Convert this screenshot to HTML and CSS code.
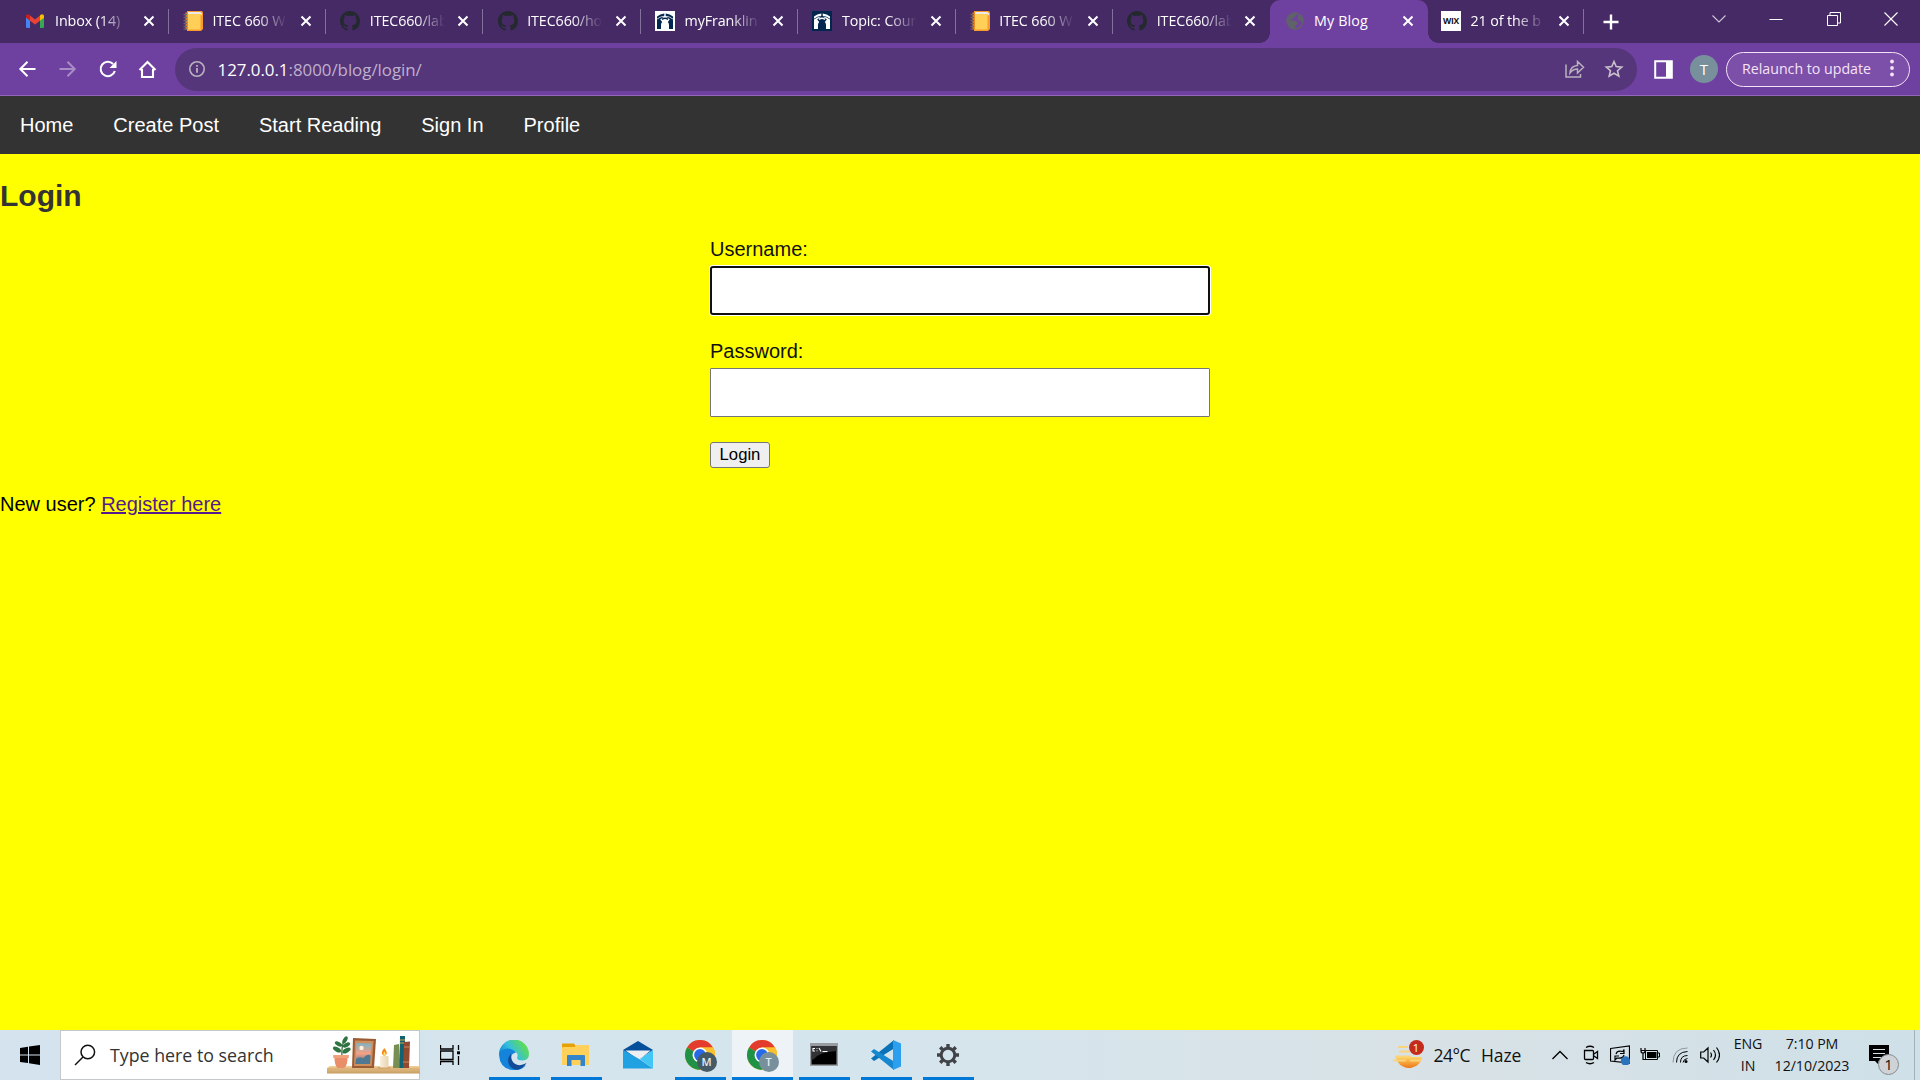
FILE: index.html
```html
<!DOCTYPE html>
<html lang="en">
<head>
<meta charset="utf-8">
<title>My Blog</title>
<link rel="stylesheet" href="styles.css">
</head>
<body>
<svg class="defs" width="0" height="0">
  <symbol id="x" viewBox="0 0 12 12"><path d="M1.500 1.500l9 9M10.500 1.500l-9 9" stroke="#fff" stroke-width="2" fill="none"/></symbol>
  <symbol id="github" viewBox="0 0 16 16"><path fill="#24292f" d="M8 0C3.58 0 0 3.58 0 8c0 3.54 2.29 6.53 5.47 7.59.4.07.55-.17.55-.38 0-.19-.01-.82-.01-1.49-2.01.37-2.53-.49-2.69-.94-.09-.23-.48-.94-.82-1.13-.28-.15-.68-.52-.01-.53.63-.01 1.08.58 1.23.82.72 1.21 1.87.87 2.33.66.07-.52.28-.87.51-1.07-1.78-.2-3.64-.89-3.64-3.95 0-.87.31-1.59.82-2.15-.08-.2-.36-1.02.08-2.12 0 0 .67-.21 2.2.82.64-.18 1.32-.27 2-.27s1.36.09 2 .27c1.53-1.04 2.2-.82 2.2-.82.44 1.1.16 1.92.08 2.12.51.56.82 1.27.82 2.15 0 3.07-1.87 3.75-3.65 3.95.29.25.54.73.54 1.48 0 1.07-.01 1.93-.01 2.2 0 .21.15.46.55.38A8.01 8.01 0 0 0 16 8c0-4.42-3.58-8-8-8z"/></symbol>
  <symbol id="notebook" viewBox="0 0 20 20"><path d="M4 0h14.500a1.500 1.500 0 0 1 1.500 1.500V18l-2 2H4z" fill="#fb9a2c"/><path d="M5 1h12.500l1.500 1.500v2L17 3H5z" fill="#eceae8"/><path d="M4.500 3h13v15.500h-13z" fill="#ffcf57"/><path d="M2.500 1.500h2.500v17H2.500z" fill="#ee8a18"/><path d="M.5 3.500h3.500M.5 6.500h3.500M.5 9.500h3.500M.5 12.500h3.500M.5 15.500h3.500M.5 18.200h3.500" stroke="#6b6371" stroke-width="1.300"/></symbol>
  <symbol id="gate" viewBox="0 0 20 20"><path d="M2 5.500Q5 3.200 9.300 2.500v2.300Q5 5.300 2 7.800zM18 5.500Q15 3.200 10.700 2.500v2.300q4.300.5 7.300 3z" fill="currentColor"/><path d="M2 8.500Q5 6 9 5.600L5.200 8.500l2 2.500Q6 12 6 14v4H2zM18 8.500Q15 6 11 5.600l3.800 2.900-2 2.500Q14 12 14 14v4h4z" fill="currentColor"/><path d="M7 8.300Q10 6 13 8.300" fill="none" stroke="currentColor" stroke-width="1.500"/></symbol>
  <symbol id="chrome" viewBox="0 0 30 30"><circle cx="15" cy="15" r="15" fill="#fbc02d"/><path d="M15 15L2 7.500A15 15 0 0 1 28 7.500H15z" fill="#e33b2e"/><path d="M15 15L2 7.500A15 15 0 0 0 14.600 30L21.500 18.700z" fill="#209246"/><path d="M15 7.500h13.200A15 15 0 0 1 14.600 30L21.500 18.700z" fill="#fbc02d"/><circle cx="15" cy="15" r="7.500" fill="#fff"/><circle cx="15" cy="15" r="5.900" fill="#2869ea"/></symbol>
</svg>

<header class="browser">
  <div class="tabstrip">
    <div class="tab">
      <svg class="fav" viewBox="0 0 20 20"><path d="M1 5.500l4 3V17H2.200A1.200 1.200 0 0 1 1 15.800z" fill="#4285f4"/><path d="M19 5.500l-4 3V17h2.800a1.200 1.200 0 0 0 1.200-1.200z" fill="#34a853"/><path d="M5 4.500l5 3.900 5-3.900v5.200l-5 3.900-5-3.900z" fill="#ea4335"/><path d="M1 5.200C1 3.200 3 2.600 4.300 3.800L5 4.500v5.200L1 6.800z" fill="#c5221f"/><path d="M19 5.200c0-2-2-2.600-3.300-1.400l-.7.7v5.200l4-2.900z" fill="#fbbc04"/></svg>
      <span class="title">Inbox (14)</span><svg class="close"><use href="#x"/></svg>
    </div>
    <div class="tab"><svg class="fav"><use href="#notebook"/></svg><span class="title">ITEC 660 W</span><svg class="close"><use href="#x"/></svg></div>
    <div class="tab"><svg class="fav"><use href="#github"/></svg><span class="title">ITEC660/lab</span><svg class="close"><use href="#x"/></svg></div>
    <div class="tab"><svg class="fav"><use href="#github"/></svg><span class="title">ITEC660/ho</span><svg class="close"><use href="#x"/></svg></div>
    <div class="tab"><svg class="fav gate-light"><use href="#gate"/></svg><span class="title">myFranklin</span><svg class="close"><use href="#x"/></svg></div>
    <div class="tab"><svg class="fav gate-dark"><use href="#gate"/></svg><span class="title">Topic: Cour</span><svg class="close"><use href="#x"/></svg></div>
    <div class="tab"><svg class="fav"><use href="#notebook"/></svg><span class="title">ITEC 660 W</span><svg class="close"><use href="#x"/></svg></div>
    <div class="tab no-line"><svg class="fav"><use href="#github"/></svg><span class="title">ITEC660/lab</span><svg class="close"><use href="#x"/></svg></div>
    <div class="tab active">
      <svg class="fav" viewBox="0 0 20 20"><circle cx="10" cy="10" r="8" fill="none" stroke="#5f6368" stroke-width="1.500"/><path d="M2 9.500Q3 3 9.500 2l2 1.500-.5 2-2.500.5v2H6l-.5 1.500h5l2 1.500v2l-2 1.500v2.500L8 18Q2 15.500 2 9.500zM14 3l3.500 4 .5 4-2.500-.5-1.500-1.500-2-1 1-2z" fill="#5f6368"/></svg>
      <span class="title">My Blog</span><svg class="close"><use href="#x"/></svg>
    </div>
    <div class="tab last"><span class="fav wix">WIX</span><span class="title">21 of the b</span><svg class="close"><use href="#x"/></svg></div>
    <svg class="new-tab" viewBox="0 0 16 16"><path d="M8 .5v15M.5 8h15" stroke="#fff" stroke-width="2.400"/></svg>
    <div class="window-controls">
      <svg viewBox="0 0 14 14"><path d="M.5 3.500L7 10l6.500-6.500" fill="none" stroke="#cfc8d8" stroke-width="1.100"/></svg>
      <svg viewBox="0 0 14 14"><path d="M.5 7.500h13" stroke="#fff"/></svg>
      <svg viewBox="0 0 14 14"><path d="M.5 3.500h10v10H.5zM3 3.500v-3h10.500V11h-3" fill="none" stroke="#fff"/></svg>
      <svg viewBox="0 0 14 14"><path d="M.5.500l13 13M13.500.500l-13 13" stroke="#fff" stroke-width="1.100"/></svg>
    </div>
  </div>

  <div class="toolbar">
    <div class="nav-buttons">
      <svg viewBox="0 0 20 20"><path d="M18.500 10H3.500M10.500 2.800L3.300 10l7.200 7.200" fill="none" stroke="#fff" stroke-width="2"/></svg>
      <svg class="dim" viewBox="0 0 20 20"><path d="M2.500 10h15M10.500 2.800l7.200 7.200-7.200 7.200" fill="none" stroke="#fff" stroke-width="2"/></svg>
      <svg viewBox="0 0 20 20"><path d="M16.100 5A7.200 7.200 0 1 0 17.800 12" fill="none" stroke="#fff" stroke-width="2.100"/><path d="M19.500 2v7h-7z" fill="#fff"/></svg>
      <svg viewBox="0 0 20 20"><path d="M2.500 11l8-8 8 8M5 10v8h11v-8" fill="none" stroke="#fff" stroke-width="2.100"/></svg>
    </div>
    <div class="omnibox">
      <svg class="info" viewBox="0 0 18 18"><circle cx="9" cy="9" r="7.200" fill="none" stroke="#b9b2be" stroke-width="1.600"/><path d="M9 8v4.800M9 5v1.800" stroke="#b9b2be" stroke-width="1.800"/></svg>
      <span class="url"><b>127.0.0.1</b>:8000/blog/login/</span>
      <svg class="share" viewBox="0 0 20 20"><path d="M1 5.500V18h14.500v-3M5 14Q5.500 7 12.500 6.500V2.500L18.500 8.300l-6 5.700v-4Q8 10 5 14z" fill="none" stroke="#b9b2be" stroke-width="1.500"/></svg>
      <svg class="star" viewBox="0 0 20 20"><path d="M10 2.500l2.200 5.100 5.500.5-4.200 3.600 1.300 5.400-4.800-2.900-4.800 2.900 1.300-5.400-4.200-3.600 5.500-.5z" fill="none" stroke="#c9c2cd" stroke-width="1.600"/></svg>
    </div>
    <svg class="panel" viewBox="0 0 19 19"><path d="M1.200 1.200h16.600v16.600H1.200z" fill="none" stroke="#fff" stroke-width="2"/><path d="M12 1h6v17h-6z" fill="#fff"/></svg>
    <span class="avatar">T</span>
    <div class="relaunch"><span>Relaunch to update</span><svg viewBox="0 0 4 18"><circle cx="2" cy="2.500" r="1.900"/><circle cx="2" cy="9" r="1.900"/><circle cx="2" cy="15.500" r="1.900"/></svg></div>
  </div>
</header>

<main class="page">
  <nav class="site-nav"><a>Home</a><a>Create Post</a><a>Start Reading</a><a>Sign In</a><a>Profile</a></nav>
  <h2>Login</h2>
  <form class="login-form">
    <label for="username">Username:</label>
    <input class="focused" id="username" type="text">
    <label for="password">Password:</label>
    <input id="password" type="password">
    <button type="button">Login</button>
  </form>
  <p>New user? <a class="register">Register here</a></p>
</main>

<footer class="taskbar">
  <svg class="start" viewBox="0 0 20 20"><path d="M0 2.900L8 1.700v7.700H0zM9 1.500L20 0v9.400H9zM0 10.400h8v7.700L0 17zM9 10.400h11V20L9 18.300z"/></svg>
  <div class="search">
    <svg class="lens" viewBox="0 0 22 22"><circle cx="13.800" cy="8" r="6.800" fill="none" stroke="#111" stroke-width="1.500"/><path d="M9 13L1 21" stroke="#111" stroke-width="1.500"/></svg>
    <span>Type here to search</span>
    <svg class="shelf" viewBox="0 0 93 46">
      <defs>
        <linearGradient id="sunset" x2="0" y2="1"><stop offset="0" stop-color="#79b4c6"/><stop offset=".5" stop-color="#f6a084"/><stop offset="1" stop-color="#4c7189"/></linearGradient>
        <linearGradient id="wood" x2="0" y2="1"><stop offset="0" stop-color="#f1cf98"/><stop offset="1" stop-color="#c79c60"/></linearGradient>
        <linearGradient id="wax"><stop stop-color="#f8efdc"/><stop offset="1" stop-color="#e9d3ae"/></linearGradient>
      </defs>
      <path d="M0 32l3-2h90v7.500H0z" fill="url(#wood)"/><path d="M0 33h93" stroke="#d0a269" stroke-width=".6"/>
      <path d="M15 22Q14 10 18 2" stroke="#2f6a38" stroke-width="1.200" fill="none"/>
      <g fill="#2f7440"><ellipse cx="18" cy="4" rx="2" ry="4" transform="rotate(30 18 4)"/><ellipse cx="11.500" cy="8" rx="4" ry="2" transform="rotate(30 11.500 8)"/><ellipse cx="19.500" cy="9" rx="4" ry="2" transform="rotate(-30 19.500 9)"/><ellipse cx="10" cy="13.500" rx="4.500" ry="2.200" transform="rotate(30 10 13.500)"/><ellipse cx="19.500" cy="14.500" rx="4.500" ry="2.200" transform="rotate(-30 19.500 14.500)"/></g>
      <path d="M6.500 19h15v3h-1q0 7-3 10h-7q-3-3-3-10h-1z" fill="#e98e68"/><path d="M6.500 19h15v3h-15z" fill="#f0a27b"/>
      <path d="M26 2l23 1-2 29H25z" fill="#9a5b34"/><path d="M28 4.500l18.500.5-1.800 25H27z" fill="#cf8f5c"/><path d="M29.500 7l15 .5-1.600 20.500H28.500z" fill="url(#sunset)"/><circle cx="34.500" cy="12" r="2.200" fill="#fff1dc"/><path d="M29 23q4-3 7-.5 4-5.500 7.600-3L43 28H28.600z" fill="#4f7893"/>
      <path d="M50 31h14l-2 1.700H52z" fill="#d3a36c"/><rect x="53" y="20" width="8.500" height="11.500" rx="1" fill="url(#wax)"/><path d="M57.300 12q5 6 0 8-5-2 0-8z" fill="#f68a18"/><path d="M57.500 15.500q2.300 3 0 4.300-2.300-1.300 0-4.300z" fill="#ffe17b"/>
      <path d="M67 9l5-1 1.500 24H66z" fill="#779052"/><path d="M73 0h5v32h-5.500z" fill="#126273"/><path d="M73 4h5M73 7h5" stroke="#d3a941"/><path d="M77 6l6-.5-1 26.500h-6z" fill="#91492f"/><path d="M77 11h6M76 26h6" stroke="#cf8956"/>
    </svg>
  </div>
  <svg class="task-view" viewBox="0 0 20 20"><path d="M.5 0v4h12.500V0M.5 6h12.500v8.500H.5zM.5 20v-3.500h12.500V20M18.500 0v5M18.500 11v9" fill="none" stroke="#000" stroke-width="1.300"/><path d="M17 6.300h3v3h-3z"/></svg>
  <div class="apps">
    <span class="app running"><svg viewBox="0 0 30 30"><defs><linearGradient id="edge1" x1="0" y1=".8" x2="1" y2=".3"><stop stop-color="#0879ce"/><stop offset=".45" stop-color="#35bedd"/><stop offset="1" stop-color="#66e33a"/></linearGradient></defs><path d="M0 15A15 15 0 0 1 30 14q0 6-6.500 6.500-5 0-5.500-2.500 1.500-3-.5-5.500Q7 6 0 15z" fill="url(#edge1)"/><path d="M0 15Q2 8.500 9 8.500q5 .5 8 4-6 1-4.500 8 2 5 8 6.500 4 0 6.500-2Q22 31 14 30 1 29 0 15z" fill="#1384da"/><path d="M12 13.500q-5 6-1.500 12 3 4 7.500 4.200 6-1 9.500-6.700-7 4-12 .5-4-3-3.500-10z" fill="#124b98"/></svg></span>
    <span class="app running"><svg viewBox="0 0 30 30"><path d="M1 3.500h12l2 3v5H1z" fill="#e6a106"/><path d="M2 7h12l1-2h13v20H1V8z" fill="#ffd15a"/><path d="M6 26V16q0-1 1-1h16q1 0 1 1v10h-4.500v-6h-9v6z" fill="#3284cc"/></svg></span>
    <span class="app"><svg viewBox="0 0 30 30"><path d="M0 10L15 1l15 9-15 10z" fill="#064f9b"/><path d="M2.500 10.500h25L16 20z" fill="#eeeff3"/><path d="M0 10l17 9.500L30 28.500H0z" fill="#20a1e2"/><path d="M30 10v18.500L17 19z" fill="#42c6f5"/></svg></span>
    <span class="app running"><svg viewBox="0 0 30 30"><use href="#chrome"/></svg><i class="badge dark">M</i></span>
    <span class="app running current"><svg viewBox="0 0 30 30"><use href="#chrome"/></svg><i class="badge">T</i></span>
    <span class="app running"><svg viewBox="0 0 30 30"><path d="M1 3h28v23H1z" fill="#999da2"/><path d="M2.500 6h25v18.500h-25z" fill="#000"/><path d="M2.500 6h25v5Q10 12 5 19l-2.500 1z" fill="#303235"/><path d="M6 8.500H4V11h2M8 8v.8M8 10.500v.8M10 8l2 3.500M13.500 11.500h5" stroke="#fff" stroke-width="1.100" fill="none"/></svg></span>
    <span class="app running"><svg viewBox="0 0 30 30"><path d="M0 18.500l3 2.500L23 8.500V0z" fill="#0972b8"/><path d="M0 11.500L3 9l20 12.500V30z" fill="#1688cf"/><path d="M22 0l8 3.500v23L22 30z" fill="#2c9fee"/></svg></span>
    <span class="app running"><svg viewBox="0 0 30 30"><g transform="translate(15 15)" stroke="#404347"><circle r="6.800" fill="none" stroke-width="3"/><g id="teeth" stroke-width="3.400"><path d="M0-7.500V-11M0 7.500V11M-7.500 0H-11M7.500 0H11"/><path d="M0-7.500V-11M0 7.500V11M-7.500 0H-11M7.500 0H11" transform="rotate(45)"/></g></g></svg></span>
  </div>
  <div class="weather">
    <svg viewBox="0 0 32 32"><defs><linearGradient id="haze" x2="0" y2="1"><stop stop-color="#ffd464"/><stop offset="1" stop-color="#ed7617"/></linearGradient></defs><path d="M3.500 18H30A13 12 0 0 1 5.500 22.500z" fill="url(#haze)"/><path d="M7 8h8M8 12.500h9M4 17.500h14M2 21.500h11M19 21.500h9" stroke="#f9d47b" stroke-width="2.200" stroke-linecap="round"/></svg><i class="alert">1</i>
    <span class="temp">24°C</span><span class="haze">Haze</span>
  </div>
  <div class="tray">
    <svg class="w16" viewBox="0 0 16 20"><path d="M.5 14L8 6.500l7.500 7.500" fill="none" stroke="#000" stroke-width="1.300"/></svg>
    <svg class="w16 meet" viewBox="0 0 16 20"><path d="M1.500 5.500h8q1 0 1 1v7q0 1-1 1h-7q-1 0-1-1zM11 9l3.500-2.500v7L11 11M3 2.500q4-2.500 8 0M3 17.500q4 2.500 8 0" fill="none" stroke="#000" stroke-width="1.300"/></svg>
    <svg class="w20 sync" viewBox="0 0 20 20"><path d="M.5 3.500L19.500 1v17L.5 16z" fill="none" stroke="#000" stroke-width="1.200"/><path d="M6 9q1-4 7-2.500l1-2v4h-4M14 10q-1 4-7 3l-2 2v-4h4" fill="none" stroke="#000" stroke-width="1.200"/><circle cx="15.500" cy="16" r="4.700" fill="#2b73bb"/></svg>
    <svg class="w20 battery" viewBox="0 0 20 20"><path d="M5.500 5.500h12v9h-12zM18 8h1.500v4H18" fill="none" stroke="#000"/><path d="M7 7h9.500v6H7z"/><path d="M1 3v3q0 2 2 2t2-2V3M.5 5.500h5M3 8v6.500h3" fill="none" stroke="#000" stroke-width="1.200"/></svg>
    <svg class="w16 wifi" viewBox="0 0 16 16"><path d="M1 15.500Q1 1 15.500 1" fill="none" stroke="#8d999f"/><path d="M4.500 15.500q0-10.500 11-11M8.500 15.500q0-7 7-7" fill="none" stroke="#000"/><path d="M11 15.500q.5-3.500 4.500-4" fill="none" stroke="#000"/><circle cx="14" cy="14.500" r="1.500"/></svg>
    <svg class="w20 speaker" viewBox="0 0 20 20"><path d="M.7 7h3L8 3v14l-4.300-4h-3zM10.500 7.500q2 2.500 0 5M13.500 5q4 5 0 10M16.500 2.500q6 7.500 0 15" fill="none" stroke="#000" stroke-width="1.200"/></svg>
  </div>
  <div class="lang">ENG<br>IN</div>
  <div class="clock">7:10 PM<br><span>12/10/2023</span></div>
  <div class="notices"><svg viewBox="0 0 20 20"><path d="M0 0h20v16H9.500v3.500L6 16H0z"/><path d="M4 4.500h12M4 8.500h12M4 12.500h8" stroke="#d5e2e8" stroke-width="1.200"/></svg><i>1</i></div>
  <span class="peek"></span>
</footer>
</body>
</html>
```
FILE: styles.css
```css
* { box-sizing: border-box; }
body {
  margin: 0;
  width: 1920px;
  height: 1080px;
  overflow: hidden;
  display: flex;
  flex-direction: column;
  font-family: "Open Sans", "Noto Sans", sans-serif;
}
svg { display: block; flex: none; }
i { font-style: normal; }
.defs { position: absolute; }

/* Tabs */
.tabstrip {
  height: 43px;
  display: flex;
  align-items: center;
  padding-left: 11.200px;
  background: #462a66;
}
.tab {
  position: relative;
  width: 157.400px;
  height: 43px;
  flex: none;
  display: flex;
  align-items: center;
  padding: 0 14px 1px 14.300px;
  color: #fff;
  font-size: 14.300px;
}
.tab::after {
  content: "";
  position: absolute;
  right: 0;
  top: 9px;
  width: 1px;
  height: 25px;
  background: #83709b;
}
.tab.no-line::after, .tab.active::after { display: none; }
.tab.active { background: #6e40a0; border-radius: 10px 10px 0 0; }
.tab.active::before {
  content: "";
  position: absolute;
  left: -10px;
  right: -10px;
  bottom: 0;
  height: 10px;
  background:
    radial-gradient(circle at 0 0, transparent 9.500px, #6e40a0 10px) left / 10px 10px no-repeat,
    radial-gradient(circle at 100% 0, transparent 9.500px, #6e40a0 10px) right / 10px 10px no-repeat;
}
.tab.last { width: 156px; padding-left: 13.200px; }
.fav { width: 20px; height: 20px; flex: none; }
.gate-light { background: #fff; color: #03264f; }
.gate-dark { background: #03264f; color: #fff; }
.wix {
  background: #fff;
  color: #111;
  font: 700 8.500px/20px "Open Sans", sans-serif;
  letter-spacing: -.3px;
  text-align: center;
}
.title {
  width: 75px;
  margin-left: 9.500px;
  overflow: hidden;
  white-space: nowrap;
  line-height: 22px;
  letter-spacing: -.1px;
  -webkit-mask-image: linear-gradient(90deg, #000 60%, transparent 100%);
  mask-image: linear-gradient(90deg, #000 60%, transparent 100%);
}
.active .title { letter-spacing: .1px; -webkit-mask-image: none; mask-image: none; }
.close { width: 12px; height: 12px; margin-left: auto; }
.new-tab { width: 16px; height: 16px; margin-left: 19px; }
.window-controls {
  display: flex;
  gap: 43.300px;
  margin-left: auto;
  padding: 0 22px 6px 0;
}
.window-controls svg { width: 14px; height: 14px; }

/* Toolbar */
.toolbar {
  height: 53px;
  display: flex;
  align-items: center;
  padding-right: 10px;
  background: #6e40a0;
  border-bottom: 1px solid #9467bb;
}
.nav-buttons { display: flex; gap: 20px; padding-left: 17px; width: 175px; }
.nav-buttons svg { width: 20px; height: 20px; }
.dim { opacity: .4; }
.omnibox {
  width: 1462px;
  height: 43px;
  display: flex;
  align-items: center;
  padding: 0 13px;
  border-radius: 22px;
  background: #56367a;
}
.info { width: 18px; height: 18px; }
.url {
  margin: 0 auto 0 11.500px;
  font-size: 16.900px;
  letter-spacing: -.03px;
  color: #bfb0cc;
}
.url b { font-weight: 400; color: #fff; }
.share { width: 20px; height: 20px; margin-right: 19px; }
.star { width: 20px; height: 20px; }
.panel { width: 19px; height: 19px; margin-left: 17px; }
.avatar {
  width: 28px;
  height: 28px;
  margin-left: 17px;
  border-radius: 50%;
  background: #78909c;
  color: #fff;
  font-size: 15px;
  line-height: 28px;
  text-align: center;
}
.relaunch {
  width: 184px;
  height: 35px;
  margin-left: auto;
  padding: 0 15px 2px 15px;
  display: flex;
  align-items: center;
  justify-content: space-between;
  border: 1.500px solid #f4e3f6;
  border-radius: 18px;
  background: #7c4fa8;
  color: #f6e2f7;
  font-size: 14.200px;
  white-space: nowrap;
}
.relaunch svg { width: 4px; height: 18px; fill: #f6e2f7; }

/* Blog page */
.page {
  flex: 1;
  background: #ff0;
  font: 20px/23px "Liberation Sans", Arial, sans-serif;
  color: #000;
}
.site-nav { height: 58px; display: flex; background: #333; }
.site-nav a { padding: 18px 20px 17px; color: #fff; }
.page h2 { margin: 25px 0; font-size: 30px; line-height: 34px; color: #333; }
.login-form { width: 500px; margin: 0 auto; }
.login-form label { display: block; margin-bottom: 5px; color: #111; }
.login-form input {
  display: block;
  width: 500px;
  height: 49px;
  margin: 0 0 25px;
  border: 1px solid #767676;
  border-radius: 1px;
  background: #fff;
}
.login-form .focused {
  border: 2px solid #101010;
  border-radius: 3px;
  box-shadow: 0 0 0 1px #fff;
}
.login-form button {
  display: block;
  width: 60px;
  height: 26px;
  padding: 0;
  border: 1px solid #767676;
  border-radius: 3px;
  background: #efefef;
  color: #000;
  font: 16.670px/22px "Liberation Sans", Arial, sans-serif;
}
.page p { margin: 25px 0 0; }
.register { color: #551a8b; text-decoration: underline; }

/* Taskbar */
.taskbar {
  height: 50px;
  display: flex;
  align-items: center;
  background: linear-gradient(90deg, #d4e3ed, #d5e5ed 45%, #d8e2e6 75%, #cfe0e8);
  color: #111;
}
.start { width: 20px; height: 20px; margin: 0 20px; }
.search {
  width: 360px;
  height: 50px;
  display: flex;
  align-items: center;
  border: 1px solid #c5c8ca;
  background: #fff;
  font-size: 17.800px;
  white-space: nowrap;
}
.lens { width: 22px; height: 22px; margin: 0 14px 0 13px; }
.search span { color: #333; }
.shelf { width: 93px; height: 46px; margin: 8px -1px 0 auto; }
.task-view { width: 20px; height: 20px; margin: 0 23.500px 0 20px; }
.apps { display: flex; }
.app {
  position: relative;
  width: 62px;
  height: 50px;
  padding: 10px 15px;
}
.app svg { width: 30px; height: 30px; }
.running { background: linear-gradient(#0078d7, #0078d7) 50% 100% / 51px 3px no-repeat; }
.running.current {
  background:
    linear-gradient(#0078d7, #0078d7) 50% 100% / 61px 3px no-repeat,
    linear-gradient(#edf3f7, #edf3f7) center / 61px 50px no-repeat;
}
.badge {
  position: absolute;
  left: 27px;
  top: 22px;
  width: 20px;
  height: 20px;
  border-radius: 50%;
  background: #78909c;
  color: #e6edf0;
  font: 600 11px/20px "Open Sans", sans-serif;
  text-align: center;
}
.badge.dark { background: #455a64; }
.weather {
  position: relative;
  display: flex;
  align-items: center;
  margin-left: 412px;
  font-size: 17.500px;
}
.weather svg { width: 32px; height: 32px; }
.alert {
  position: absolute;
  left: 17px;
  top: 1px;
  width: 15px;
  height: 15px;
  border-radius: 50%;
  background: #c42b1c;
  color: #fff;
  font-size: 11px;
  line-height: 15px;
  text-align: center;
}
.temp { margin-left: 10px; letter-spacing: -.5px; }
.haze { margin-left: 11px; letter-spacing: -.1px; }
.tray { display: flex; align-items: center; margin-left: auto; }
.w16 { width: 16px; height: 20px; }
.w20 { width: 20px; height: 20px; }
.meet { margin-left: 15px; }
.sync { margin-left: 11px; }
.battery { margin-left: 10px; }
.wifi { height: 16px; margin-left: 12px; }
.speaker { margin-left: 12px; }
.lang, .clock { font-size: 14.200px; line-height: 22.500px; text-align: center; white-space: nowrap; }
.lang { width: 32px; margin-left: 12px; letter-spacing: -.1px; }
.clock { width: 80px; margin-left: 8px; letter-spacing: -.05px; }
.notices { position: relative; width: 30px; margin-left: 17px; }
.notices svg { width: 20px; height: 20px; }
.notices i {
  position: absolute;
  left: 9px;
  top: 9px;
  width: 21px;
  height: 21px;
  border: 1px solid #858b8f;
  border-radius: 50%;
  background: #cfd3d5;
  font-size: 15px;
  line-height: 19px;
  text-align: center;
}
.peek { width: 6px; height: 50px; margin-left: 15px; border-left: 1px solid #a5b1b8; }
```
